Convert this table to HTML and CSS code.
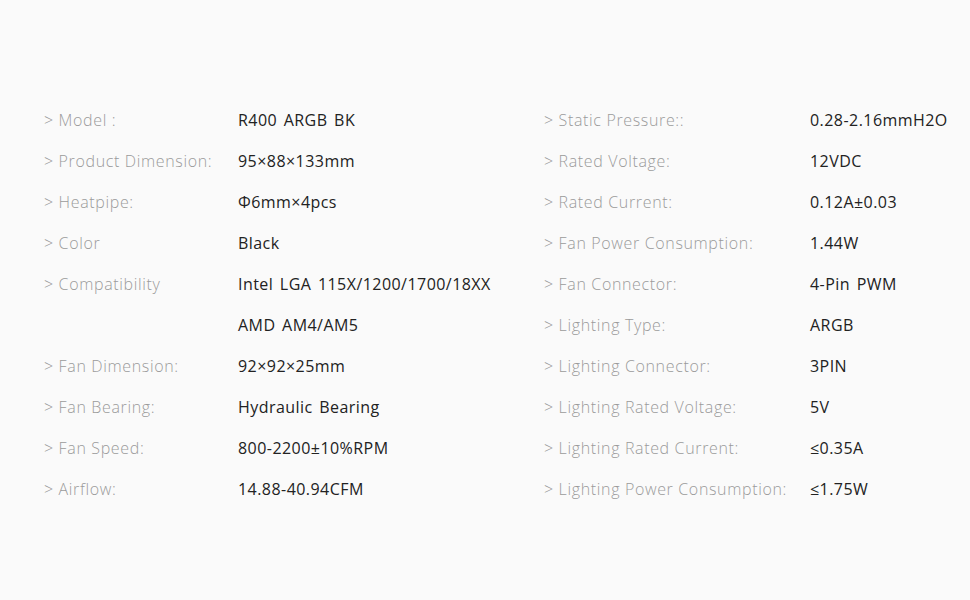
FILE: index.html
```html
<!DOCTYPE html>
<html>
<head>
<meta charset="utf-8">
<link rel="stylesheet" href="styles.css">
</head>
<body>
<div class="specs">
  <div class="col col-left">
    <div class="label">&gt; Model :</div><div class="value">R400 ARGB BK</div>
    <div class="label">&gt; Product Dimension:</div><div class="value">95×88×133mm</div>
    <div class="label">&gt; Heatpipe:</div><div class="value">Φ6mm×4pcs</div>
    <div class="label">&gt; Color</div><div class="value">Black</div>
    <div class="label">&gt; Compatibility</div><div class="value">Intel LGA 115X/1200/1700/18XX</div>
    <div class="label"></div><div class="value">AMD AM4/AM5</div>
    <div class="label">&gt; Fan Dimension:</div><div class="value">92×92×25mm</div>
    <div class="label">&gt; Fan Bearing:</div><div class="value">Hydraulic Bearing</div>
    <div class="label">&gt; Fan Speed:</div><div class="value">800-2200±10%RPM</div>
    <div class="label">&gt; Airflow:</div><div class="value">14.88-40.94CFM</div>
  </div>
  <div class="col col-right">
    <div class="label">&gt; Static Pressure::</div><div class="value">0.28-2.16mmH2O</div>
    <div class="label">&gt; Rated Voltage:</div><div class="value">12VDC</div>
    <div class="label">&gt; Rated Current:</div><div class="value">0.12A±0.03</div>
    <div class="label">&gt; Fan Power Consumption:</div><div class="value">1.44W</div>
    <div class="label">&gt; Fan Connector:</div><div class="value">4-Pin PWM</div>
    <div class="label">&gt; Lighting Type:</div><div class="value">ARGB</div>
    <div class="label">&gt; Lighting Connector:</div><div class="value">3PIN</div>
    <div class="label">&gt; Lighting Rated Voltage:</div><div class="value">5V</div>
    <div class="label">&gt; Lighting Rated Current:</div><div class="value">≤0.35A</div>
    <div class="label">&gt; Lighting Power Consumption:</div><div class="value">≤1.75W</div>
  </div>
</div>
</body>
</html>
```

FILE: styles.css
```css
html, body {
  margin: 0;
  padding: 0;
  background: #fafafa;
}
body {
  width: 970px;
  height: 600px;
  overflow: hidden;
  font-family: "Open Sans", "Noto Sans", sans-serif;
  font-size: 16px;
}
.specs {
  display: flex;
  padding-top: 99px;
  padding-left: 44px;
}
.col {
  display: grid;
  grid-auto-rows: 41px;
  align-items: center;
}
.col-left {
  grid-template-columns: 194px 306px;
}
.col-right {
  grid-template-columns: 266px 160px;
}
.label {
  color: #9a9a9a;
  font-weight: 300;
  letter-spacing: 0.65px;
  white-space: nowrap;
}
.value {
  color: #222;
  letter-spacing: 0.45px;
  word-spacing: 2px;
  white-space: nowrap;
}
```
